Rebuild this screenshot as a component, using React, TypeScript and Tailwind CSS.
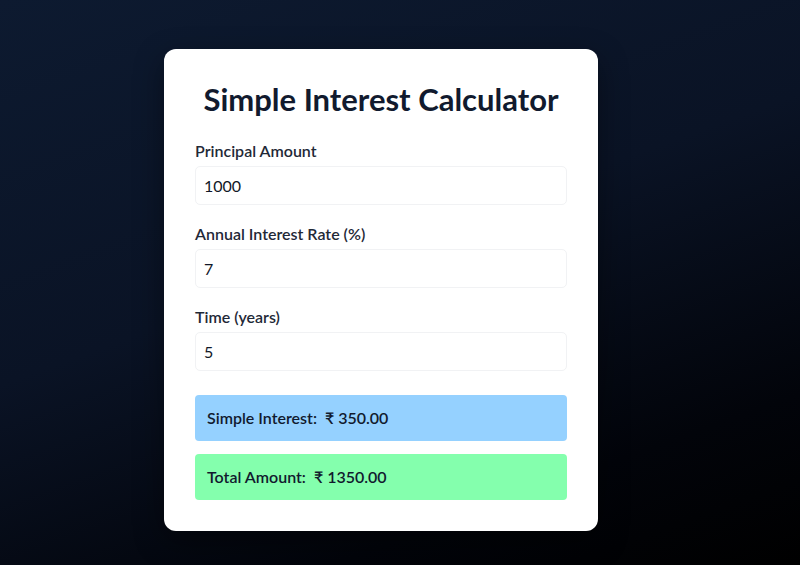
import React from "react";

const font = { fontFamily: 'Lato, "Noto Sans", sans-serif' };

function Field({ label, value }: { label: string; value: string }) {
  return (
    <div className="flex flex-col">
      <label className="text-[16px] font-semibold text-[#1f2937] leading-[21px] mb-[5px]">{label}</label>
      <div className="h-[39px] rounded-[5px] border border-[#f1f2f4] flex items-center px-[8px] text-[16px] text-[#111827]">
        {value}
      </div>
    </div>
  );
}

export default function App() {
  return (
    <div
      style={font}
      className="w-[800px] h-[565px] overflow-hidden bg-[linear-gradient(160deg,#0d1a30_0%,#0a1325_45%,#02040a_80%,#000000_100%)] flex justify-center items-start pt-[49px] pr-[38px]"
    >
      <div className="w-[434px] bg-white rounded-[12px] px-[31px] pt-[30px] pb-[31px] flex flex-col shadow-[0_10px_30px_rgba(0,0,0,0.4)]">
        <h1 className="text-[31px] font-bold text-[#111a2e] text-center leading-[40px] whitespace-nowrap">
          Simple Interest Calculator
        </h1>
        <div className="mt-[21px] flex flex-col gap-[18px]">
          <Field label="Principal Amount" value="1000" />
          <Field label="Annual Interest Rate (%)" value="7" />
          <Field label="Time (years)" value="5" />
        </div>
        <div className="mt-[24px] flex flex-col gap-[13px]">
          <div className="h-[46px] rounded-[4px] bg-[#95d1ff] flex items-center px-[12px] text-[16px] font-semibold text-[#111a2e]">
            Simple Interest:&nbsp; ₹ 350.00
          </div>
          <div className="h-[46px] rounded-[4px] bg-[#84ffad] flex items-center px-[12px] text-[16px] font-semibold text-[#111a2e]">
            Total Amount:&nbsp; ₹ 1350.00
          </div>
        </div>
      </div>
    </div>
  );
}
